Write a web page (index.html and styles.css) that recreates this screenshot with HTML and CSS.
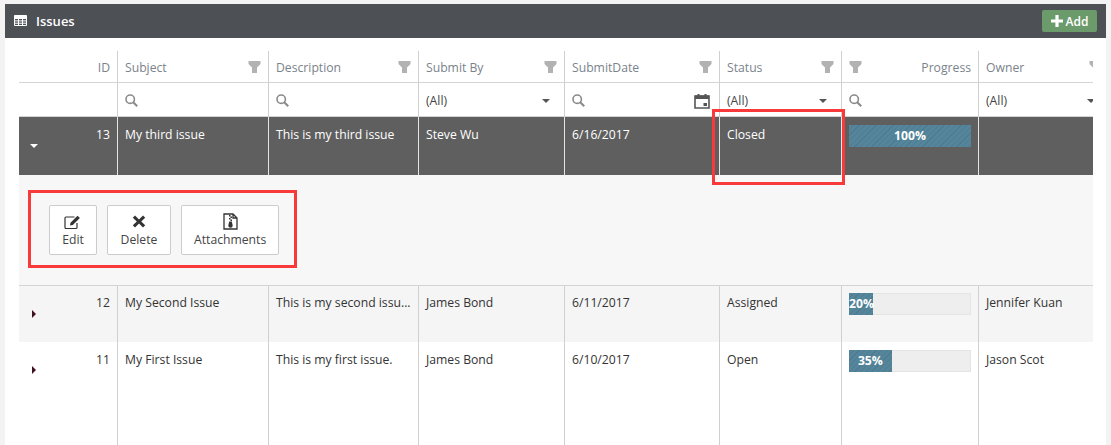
FILE: index.html
```html
<!DOCTYPE html>
<html lang="en">
<head>
    <meta charset="UTF-8">
    <meta name="viewport" content="width=device-width, initial-scale=1.0">
    <title>Issues</title>
    <link rel="stylesheet" href="styles.css">
</head>
<body>
    <svg class="icon-defs" width="0" height="0">
        <symbol id="funnel" viewBox="0 0 12 12"><path d="M0 0h12v3L8.500 6.500V12h-5V6.500L0 3z"/></symbol>
        <symbol id="search" viewBox="0 0 13 13"><circle cx="5.200" cy="5.200" r="4.200" fill="none" stroke="currentColor" stroke-width="1.600"/><path d="M8.200 8.200l4 4" fill="none" stroke="currentColor" stroke-width="2"/></symbol>
    </svg>

    <section class="panel">
        <header class="panel-head">
            <h1 class="panel-title">
                <svg class="table-icon" viewBox="0 0 13 11" width="13" height="11"><path d="M.5.5h12v10H.5zM.5 3.500h12M.5 5.900h12M.5 8.200h12M4.500 3.500v7M8.500 3.500v7" fill="none" stroke="currentColor"/><path d="M.5.5h12v3H.5z" fill="currentColor"/></svg>
                Issues
            </h1>
            <button class="add-btn"><svg viewBox="0 0 12 12" width="12" height="12"><path d="M4.400 0h3.200v4.400H12v3.200H7.600V12H4.400V7.600H0V4.400h4.400z" fill="currentColor"/></svg>Add</button>
        </header>

        <div class="grid-wrap">
            <table class="grid">
                <colgroup>
                    <col class="col-id"><col class="col-subject"><col class="col-desc"><col class="col-by">
                    <col class="col-date"><col class="col-status"><col class="col-progress"><col class="col-owner">
                </colgroup>
                <thead>
                    <tr class="head-row">
                        <th class="num">ID</th>
                        <th><div class="th-in">Subject<svg class="funnel"><use href="#funnel"/></svg></div></th>
                        <th><div class="th-in">Description<svg class="funnel"><use href="#funnel"/></svg></div></th>
                        <th><div class="th-in">Submit By<svg class="funnel"><use href="#funnel"/></svg></div></th>
                        <th><div class="th-in">SubmitDate<svg class="funnel"><use href="#funnel"/></svg></div></th>
                        <th><div class="th-in">Status<svg class="funnel"><use href="#funnel"/></svg></div></th>
                        <th><div class="th-in"><svg class="funnel"><use href="#funnel"/></svg>Progress</div></th>
                        <th><div class="th-in">Owner<svg class="funnel"><use href="#funnel"/></svg></div></th>
                    </tr>
                    <tr class="filter-row">
                        <td></td>
                        <td><svg class="search"><use href="#search"/></svg></td>
                        <td><svg class="search"><use href="#search"/></svg></td>
                        <td><div class="filter-in">(All)<span class="caret"></span></div></td>
                        <td>
                            <div class="filter-in">
                                <svg class="search"><use href="#search"/></svg>
                                <svg class="calendar" viewBox="0 0 16 16" width="16" height="16"><path d="M1 3h14v12H1z" fill="none" stroke="currentColor" stroke-width="1.600"/><path d="M1 2.500h14v3.500H1zM3.500 1h2v2h-2zM10.500 1h2v2h-2zM9.500 10h3.500v3H9.500z" fill="currentColor"/></svg>
                            </div>
                        </td>
                        <td><div class="filter-in">(All)<span class="caret"></span></div></td>
                        <td><svg class="search"><use href="#search"/></svg></td>
                        <td><div class="filter-in">(All)<span class="caret"></span></div></td>
                    </tr>
                </thead>
                <tbody>
                    <tr class="row row-selected">
                        <td class="num"><div>13</div><span class="arrow-down"></span></td>
                        <td>My third issue</td>
                        <td>This is my third issue</td>
                        <td>Steve Wu</td>
                        <td>6/16/2017</td>
                        <td>Closed</td>
                        <td><div class="bar"><div class="bar-fill" style="width: 100%">100%</div></div></td>
                        <td></td>
                    </tr>
                    <tr class="detail-row">
                        <td colspan="8">
                            <div class="actions">
                                <button class="action-btn">
                                    <svg viewBox="0 0 18 17" width="18" height="17"><path d="M13 10v4.500a1 1 0 0 1-1 1H2a1 1 0 0 1-1-1V5a1 1 0 0 1 1-1h8.500" fill="none" stroke="#333" stroke-width="1.200"/><path d="M6 12.500l.5-2.800L13.500 2.700l2.400 2.400L8.800 12z" fill="#333"/></svg>
                                    Edit
                                </button>
                                <button class="action-btn">
                                    <svg viewBox="0 0 14 17" width="14" height="17"><path d="M3 2.500l4 4 4-4 2.200 2.200-4 3.800 4 3.800-2.200 2.200-4-4-4 4L.8 12.300l4-3.800-4-3.800z" fill="#333"/></svg>
                                    Delete
                                </button>
                                <button class="action-btn">
                                    <svg viewBox="0 0 15 17" width="15" height="17"><path d="M1 1h9l4 4v11H1zM10 1v4h4" fill="none" stroke="#333" stroke-width="1.300"/><path d="M6 2h1.500v1.500H6zM7.500 3.500H9V5H7.500zM6 5h1.500v1.500H6zM7.500 6.500H9V8H7.500zM6.200 8.500h2.600l.9 4a2.200 2.200 0 1 1-4.400 0z" fill="#333"/></svg>
                                    Attachments
                                </button>
                            </div>
                        </td>
                    </tr>
                    <tr class="row row-alt">
                        <td class="num"><div>12</div><span class="arrow-right"></span></td>
                        <td>My Second Issue</td>
                        <td>This is my second issu...</td>
                        <td>James Bond</td>
                        <td>6/11/2017</td>
                        <td>Assigned</td>
                        <td><div class="bar"><div class="bar-fill" style="width: 20%">20%</div></div></td>
                        <td>Jennifer Kuan</td>
                    </tr>
                    <tr class="row row-last">
                        <td class="num"><div>11</div><span class="arrow-right"></span></td>
                        <td>My First Issue</td>
                        <td>This is my first issue.</td>
                        <td>James Bond</td>
                        <td>6/10/2017</td>
                        <td>Open</td>
                        <td><div class="bar"><div class="bar-fill" style="width: 35%">35%</div></div></td>
                        <td>Jason Scot</td>
                    </tr>
                </tbody>
            </table>
        </div>

        <div class="callout callout-status"></div>
        <div class="callout callout-actions"></div>
    </section>
</body>
</html>
```

FILE: styles.css
```css
html, body {
    height: 445px;
    overflow: hidden;
}
body {
    margin: 0;
    padding: 4px 5px 0;
    box-sizing: border-box;
    background-color: #f3f3f3;
    font-family: "Open Sans", "Noto Sans", sans-serif;
    font-size: 12.2px;
    color: #333;
}
.icon-defs {
    position: absolute;
}
.panel {
    position: relative;
    width: 1101px;
    height: 441px;
    background-color: white;
    overflow: hidden;
}
.panel-head {
    height: 34px;
    background-color: #4d5055;
    color: white;
    display: flex;
    align-items: center;
    justify-content: space-between;
    padding: 0 9px;
}
.panel-title {
    margin: 0;
    font-size: 13px;
    font-weight: 600;
    display: flex;
    align-items: center;
    gap: 9px;
}
.table-icon {
    margin-bottom: 2px;
}
.add-btn {
    width: 55px;
    height: 22px;
    padding: 0;
    border: 0;
    border-radius: 2px;
    background-color: #6b9a6b;
    color: white;
    font: 600 12px "Open Sans", sans-serif;
    display: flex;
    align-items: center;
    justify-content: center;
    gap: 3px;
}
.grid-wrap {
    margin: 13px 13px 0 14px;
    overflow: hidden;
}
.grid {
    width: 1090px;
    table-layout: fixed;
    border-collapse: separate;
    border-spacing: 0;
}
.col-id { width: 98px; }
.col-subject { width: 151px; }
.col-desc { width: 150px; }
.col-by { width: 146px; }
.col-date { width: 155px; }
.col-status { width: 122px; }
.col-progress { width: 137px; }
.col-owner { width: 131px; }
th, td {
    padding: 0 7px;
    text-align: left;
    vertical-align: top;
    border-left: 1px solid #d0d0d0;
    white-space: nowrap;
}
th:first-child, td:first-child {
    border-left: 0;
}
.num {
    text-align: right;
}
.head-row th {
    height: 29px;
    padding-top: 2px;
    vertical-align: middle;
    font-weight: 400;
    color: #7a838b;
    border-bottom: 1px solid #d4d4d4;
}
.th-in {
    display: flex;
    align-items: center;
    justify-content: space-between;
}
.funnel {
    width: 13px;
    height: 12px;
    margin-top: -2px;
    fill: #b2b2b2;
}
.filter-row td {
    height: 31px;
    padding-top: 2px;
    vertical-align: middle;
    border-bottom: 1px solid #d4d4d4;
}
.filter-in {
    display: flex;
    align-items: center;
    justify-content: space-between;
    padding-right: 1px;
    color: #444;
}
.search {
    display: block;
    width: 13px;
    height: 13px;
    color: #8a8a8a;
}
.caret {
    width: 0;
    height: 0;
    margin-right: 6px;
    border-left: 4px solid transparent;
    border-right: 4px solid transparent;
    border-top: 4px solid #555;
}
.calendar {
    color: #555;
    margin-right: 1px;
}
.row td {
    height: 47px;
    padding-top: 9px;
}
.row .num > div {
    height: 15px;
}
.row-selected td {
    height: 49px;
    background-color: #5f5f5f;
    color: white;
    border-left-color: #e4e4e4;
}
.row-alt td {
    height: 48px;
    padding-top: 8px;
    background-color: #f5f5f5;
}
.row-alt .num > div {
    height: 16px;
}
.row-last td {
    height: 130px;
}
.arrow-down, .arrow-right {
    display: block;
    width: 0;
    height: 0;
}
.arrow-down {
    margin: 3px 0 0 4px;
    border-left: 4px solid transparent;
    border-right: 4px solid transparent;
    border-top: 4px solid white;
}
.arrow-right {
    margin: 0 0 0 6px;
    border-top: 4px solid transparent;
    border-bottom: 4px solid transparent;
    border-left: 4px solid #40121f;
}
.bar {
    height: 22px;
    margin-top: -1px;
    background-color: #eee;
    box-shadow: inset 0 0 0 1px #e4e4e4;
}
.bar-fill {
    height: 22px;
    background-color: #54859b;
    background-image: repeating-linear-gradient(135deg, transparent 0 3px, rgba(0, 0, 0, 0.08) 3px 4px);
    color: white;
    font-weight: 700;
    line-height: 22px;
    text-align: center;
}
.detail-row td {
    height: 111px;
    padding: 0;
    border-left: 0;
    border-bottom: 1px solid #d4d4d4;
    background-color: #f7f7f7;
    box-sizing: border-box;
    vertical-align: top;
}
.actions {
    display: flex;
    gap: 10px;
    padding: 30px 0 0 30px;
}
.action-btn {
    height: 50px;
    min-width: 48px;
    padding: 0 12px;
    background-color: white;
    border: 1px solid #ccc;
    border-radius: 2px;
    color: #444;
    font: 12.2px "Open Sans", sans-serif;
    display: flex;
    flex-direction: column;
    align-items: center;
    justify-content: center;
    gap: 1px;
}
.action-btn:nth-child(2) {
    min-width: 64px;
}
.callout {
    position: absolute;
    border: 3px solid #f93a3a;
    box-sizing: border-box;
}
.callout-status {
    left: 707px;
    top: 105px;
    width: 133px;
    height: 76px;
}
.callout-actions {
    left: 23px;
    top: 186px;
    width: 269px;
    height: 78px;
}
```
